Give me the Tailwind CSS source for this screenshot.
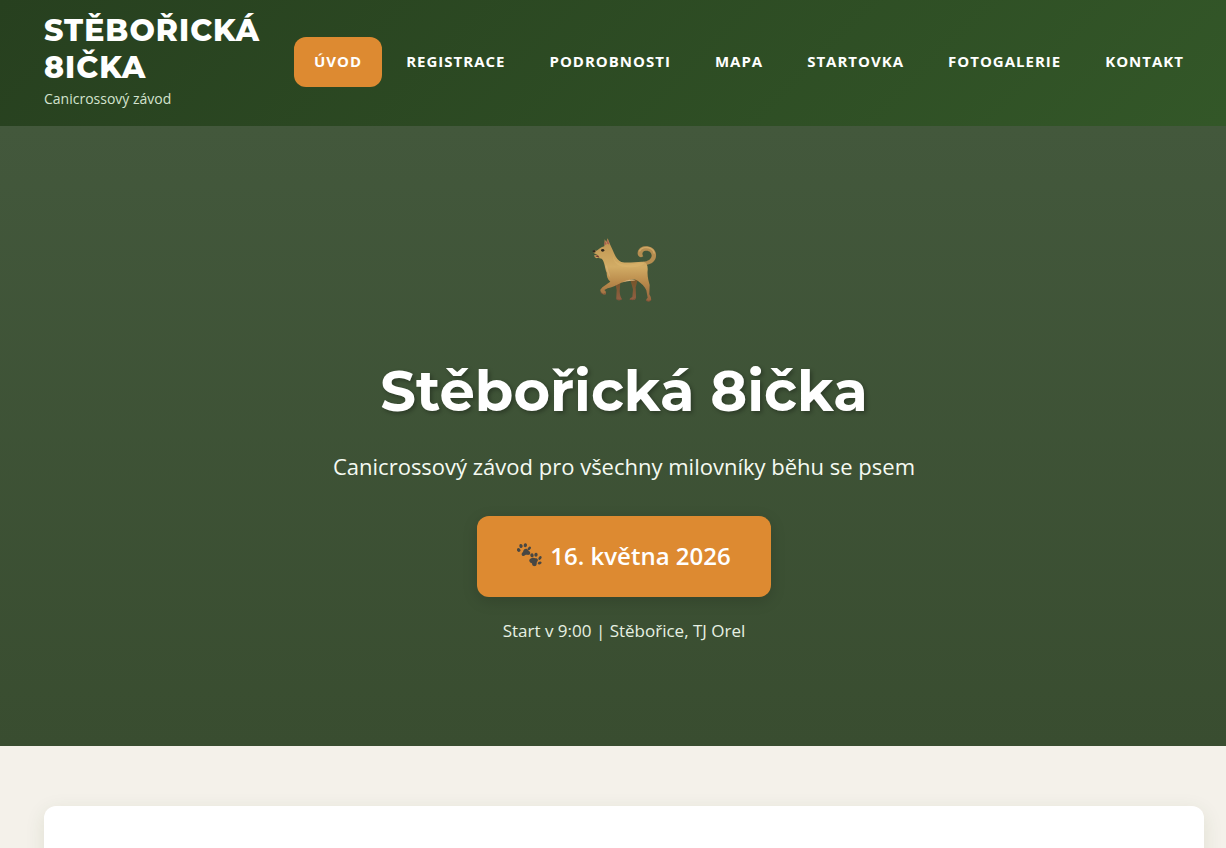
<!DOCTYPE html>
<html lang="cs">
<head>
<meta charset="utf-8">
<meta name="viewport" content="width=device-width, initial-scale=1">
<title>Stěbořická 8ička</title>
<script src="https://cdn.jsdelivr.net/npm/@tailwindcss/browser@4"></script>
</head>
<body class="overflow-x-hidden bg-[#f4f1ea] font-['Open_Sans','Noto_Sans',sans-serif] text-white">
<header class="flex items-center justify-between bg-linear-135 from-[#27401f] to-[#335728] pt-3 pr-[22px] pb-[14px] pl-[44px]">
  <a href="#" class="block">
    <span class="block font-[Montserrat,Inter,sans-serif] text-[30px] leading-[37px] font-extrabold tracking-[1px]">STĚBOŘICKÁ<br>8IČKA</span>
    <span class="block text-[14px] leading-[26px] font-medium text-[#d4e3cf]">Canicrossový závod</span>
  </a>
  <nav class="flex gap-1 text-[15px] leading-[26px] font-bold tracking-[1px] whitespace-nowrap">
    <a href="#uvod" class="rounded-xl bg-[#dd8a31] px-5 pt-[11px] pb-[13px]">ÚVOD</a>
    <a href="#registrace" class="px-5 pt-[11px] pb-[13px]">REGISTRACE</a>
    <a href="#podrobnosti" class="px-5 pt-[11px] pb-[13px]">PODROBNOSTI</a>
    <a href="#mapa" class="px-5 pt-[11px] pb-[13px]">MAPA</a>
    <a href="#startovka" class="px-5 pt-[11px] pb-[13px]">STARTOVKA</a>
    <a href="#fotogalerie" class="px-5 pt-[11px] pb-[13px]">FOTOGALERIE</a>
    <a href="#kontakt" class="px-5 pt-[11px] pb-[13px]">KONTAKT</a>
  </nav>
</header>
<main>
  <section id="uvod" class="flex flex-col items-center bg-linear-to-b from-[#43583c] to-[#394d30] pt-[99px] pb-[100px] pl-[22px] text-center">
    <svg class="size-[90px]" viewBox="-3 0 270 270" role="img" aria-label="Pes">
      <defs>
        <linearGradient id="fur" x1="0" y1="0" x2="0" y2="1"><stop offset="0" stop-color="#bd9350"/><stop offset=".45" stop-color="#d2ac65"/><stop offset=".7" stop-color="#b98a4b"/><stop offset="1" stop-color="#95633e"/></linearGradient>
        <linearGradient id="far" x1="0" y1="0" x2="0" y2="1"><stop offset="0" stop-color="#765429"/><stop offset="1" stop-color="#916043"/></linearGradient>
      </defs>
      <path d="M106 174L121 171L119 199Q120 216 126 222Q123 227 112 225Q107 224 109 217L110 195ZM151 165L173 165L167 187L168 212Q169 225 160 225L149 224Q148 219 157 216L159 193Z" fill="url(#far)"/>
      <path d="M194 120C218 119 230 104 228 87C226 70 209 62 193 64C180 66 172 76 173 87C174 96 184 99 190 94C184 86 188 78 197 77C208 76 215 83 215 92C214 102 204 109 189 110Z" fill="#b58d50"/>
      <path d="M223 86C221 71 207 66 193 68Q183 69 178 79" fill="none" stroke="#d0a866" stroke-width="4"/>
      <path d="M73 64L74 43L79 51L83 40L91 60L98 75C104 90 112 107 124 111C146 116 169 109 190 110C200 112 204 121 203 136C201 153 206 168 209 180L208 208Q215 219 213 226Q210 231 199 228Q197 223 203 218L199 196C194 183 184 176 174 168C158 158 145 168 124 173C110 180 94 188 83 190L73 195Q79 199 78 206Q75 211 67 206Q60 201 61 194C68 183 81 178 91 170C82 162 80 152 80 143C74 129 75 111 65 101C57 98 49 102 44 96L43 90L53 89L42 85Q37 79 42 76L50 77C59 72 62 66 73 64Z" fill="url(#fur)"/>
      <path d="M98 88C103 111 112 117 139 119C164 119 178 110 193 115C188 123 166 130 134 126C109 124 99 109 98 88Z" fill="#dfb970" opacity=".4"/>
      <path d="M75 112C79 124 78 135 86 151L91 158C91 147 84 138 82 126Z" fill="#e2c495" opacity=".35"/>
      <path d="M126 172C140 165 156 161 167 166C158 168 141 168 126 172Z" fill="#d9b580"/>
      <path d="M73 60L75 47L80 58ZM80 55L83 43L88 59Z" fill="#a95d50"/>
      <path d="M38 77Q42 73 47 77L46 82Q41 84 38 80Z" fill="#302821"/>
      <path d="M46 92L54 91L59 98Q50 96 46 94Z" fill="#70372e"/>
      <ellipse cx="68" cy="76" rx="5" ry="4" fill="#30281d"/>
      <path d="M61 203Q70 212 78 204M198 226Q207 232 214 225M109 222Q118 228 126 221M149 222Q159 228 167 220" fill="none" stroke="#774d36" stroke-width="2"/>
    </svg>
    <h1 class="mt-10 font-[Montserrat,Inter,sans-serif] text-[56px] leading-[72px] font-bold text-shadow-[2px_2px_4px_rgb(0_0_0/0.3)]">Stěbořická 8ička</h1>
    <p class="mt-[19px] text-[22px] leading-10 font-medium text-[#f5faf2]">Canicrossový závod pro všechny milovníky běhu se psem</p>
    <p class="mt-[30px] flex items-center gap-2 rounded-xl bg-[#dd8a31] px-10 pt-[19px] pb-[21px] text-[24px] leading-[41px] font-semibold shadow-[0_4px_15px_rgb(0_0_0/0.15)]">
      <svg class="size-[25px]" viewBox="0 0 75 75" fill="#484743" aria-hidden="true">
        <path d="M16 38C12 34 14 30 18 27C19 17 29 14 33 21C36 24 42 27 39 33C36 38 29 34 25 36C22 38 19 40 16 38Z"/><ellipse cx="5" cy="21" rx="5" ry="6" transform="rotate(-38 5 21)"/><ellipse cx="12" cy="9" rx="5" ry="6" transform="rotate(-15 12 9)"/><ellipse cx="25" cy="7" rx="5" ry="6" transform="rotate(10 25 7)"/><ellipse cx="37" cy="16" rx="4" ry="6" transform="rotate(45 37 16)"/>
        <path d="M55 69C47 71 45 66 45 61C37 58 34 51 40 47C46 44 49 43 55 46C63 46 65 52 60 57C58 61 61 67 55 69Z"/><ellipse cx="45" cy="37" rx="5" ry="6" transform="rotate(-20 45 37)"/><ellipse cx="57" cy="35" rx="5" ry="6" transform="rotate(8 57 35)"/><ellipse cx="69" cy="45" rx="4" ry="6" transform="rotate(35 69 45)"/><ellipse cx="68" cy="60" rx="4" ry="6" transform="rotate(65 68 60)"/>
      </svg>
      <span>16. května 2026</span>
    </p>
    <p class="mt-[19px] text-[17px] leading-[30px] text-[#e7f1e3]">Start v 9:00 | Stěbořice, TJ Orel</p>
  </section>
  <section class="pt-[60px] pr-[22px] pb-[60px] pl-[44px]">
    <div class="min-h-40 rounded-xl bg-white shadow-[0_5px_20px_rgb(45_80_22/0.1)]"></div>
  </section>
</main>
</body>
</html>
